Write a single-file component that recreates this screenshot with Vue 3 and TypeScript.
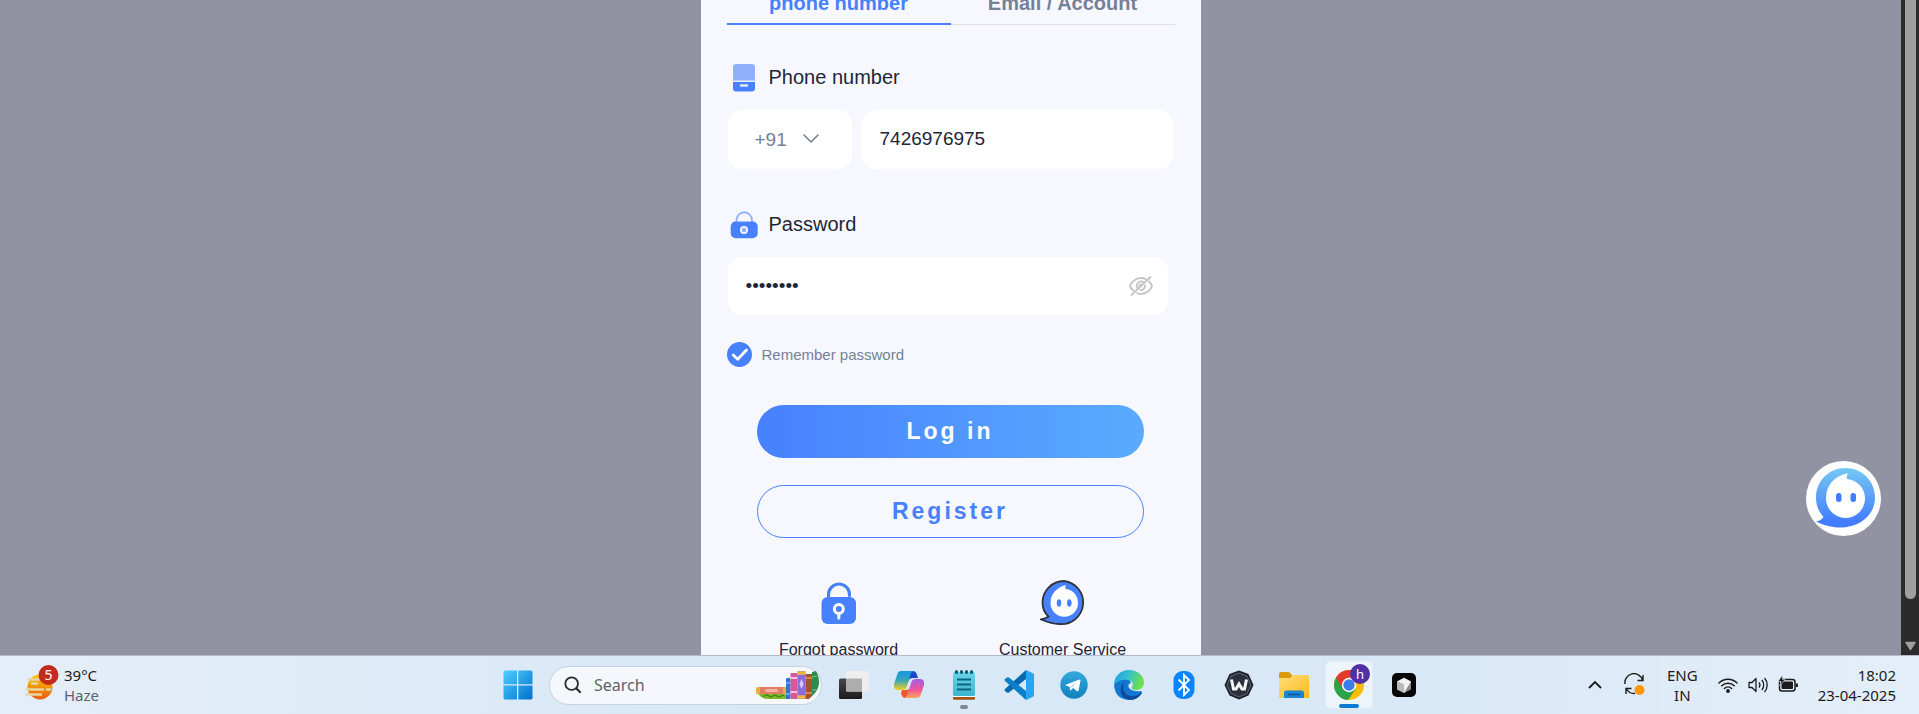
<script setup lang="ts">
import { ref } from 'vue'

const activeTab = ref<'phone' | 'email'>('phone')
const dialCode = ref('+91')
const phone = ref('7426976975')
const password = ref('password')
const remember = ref(true)
const showPassword = ref(false)
</script>

<template>
  <div class="screen">
    <div class="browser">
      <main class="page">
        <form class="card" @submit.prevent>
          <div class="tabs" role="tablist">
            <button type="button" role="tab" class="tab" :class="{ active: activeTab === 'phone' }" @click="activeTab = 'phone'">phone number</button>
            <button type="button" role="tab" class="tab" :class="{ active: activeTab === 'email' }" @click="activeTab = 'email'">Email / Account</button>
          </div>

          <label class="field-label" for="phone">
            <svg class="label-icon" viewBox="0 0 28 28" aria-hidden="true">
              <path d="M3 17V3a3 3 0 0 1 3-3h16a3 3 0 0 1 3 3v14z" fill="#91b1ff" />
              <path d="M3 18h22v6.500a3 3 0 0 1-3 3H6a3 3 0 0 1-3-3z" fill="#4781ff" />
              <path d="M2.500 17h23" stroke="#dce6ff" stroke-width="1.200" />
              <path d="M11 21.500h6" stroke="#e4ebff" stroke-width="2.400" stroke-linecap="round" />
            </svg>
            <span>Phone number</span>
          </label>
          <div class="phone-row">
            <div class="dial">
              <select v-model="dialCode" aria-label="Country code">
                <option>+91</option>
              </select>
              <svg viewBox="0 0 16 10" aria-hidden="true"><path d="M1 1l7 7 7-7" fill="none" stroke="#768096" stroke-width="1.600" stroke-linecap="round" stroke-linejoin="round" /></svg>
            </div>
            <input id="phone" v-model="phone" class="phone-input" type="tel" />
          </div>

          <label class="field-label second" for="password">
            <svg class="label-icon" viewBox="0 0 28 28" aria-hidden="true">
              <path d="M6.500 12V9a7.500 7.500 0 0 1 15.500 0v3" fill="none" stroke="#91b1ff" stroke-width="1.800" />
              <rect x="0.700" y="10.500" width="27" height="16.800" rx="5" fill="#4781ff" />
              <circle cx="14" cy="19" r="3.200" fill="#91b1ff" stroke="#f7f8ff" stroke-width="1.700" />
            </svg>
            <span>Password</span>
          </label>
          <div class="password-box">
            <input id="password" v-model="password" :type="showPassword ? 'text' : 'password'" />
            <button type="button" aria-label="Show password" @click="showPassword = !showPassword">
              <svg viewBox="0 0 24 20" aria-hidden="true">
                <g fill="none" stroke="#c3c3c3" stroke-width="1.800" stroke-linecap="round">
                  <path d="M4.500 14.500C2.500 13 1.200 11.200 1 10c.8-3.500 5.500-8 11-8 1.800 0 3.400.4 4.800 1.100" />
                  <path d="M20 5.500c1.700 1.500 2.800 3.200 3 4.500-.8 3.500-5.500 8-11 8-1.400 0-2.700-.2-3.800-.7" />
                  <path d="M8.800 12.500A4.300 4.300 0 0 1 14.500 6.200M16 9.500a4.300 4.300 0 0 1-4.500 4.700" />
                  <path d="M21.500 1L2.500 19M10.500 10.200a1.600 1.600 0 0 1 1.500-1.800" />
                </g>
              </svg>
            </button>
          </div>

          <label class="remember">
            <input v-model="remember" type="checkbox" />
            <svg v-show="remember" viewBox="0 0 25 25" aria-hidden="true"><path d="M6.200 13l4.500 4.300L19.500 8" fill="none" stroke="#fff" stroke-width="2.800" stroke-linecap="round" stroke-linejoin="round" /></svg>
            <span>Remember password</span>
          </label>

          <div class="actions">
            <button type="submit" class="action login">Log in</button>
            <button type="button" class="action register">Register</button>
          </div>

          <div class="help">
            <a href="#forgot">
              <svg viewBox="0 0 46 46" aria-hidden="true">
                <path d="M12.500 19v-5a10.500 10.500 0 0 1 21 0v2" fill="none" stroke="#fff" stroke-width="5" stroke-linecap="round" />
                <rect x="4.500" y="16" width="36.500" height="29" rx="7" fill="#fff" />
                <path d="M12.500 19v-4.500a10.500 10.500 0 0 1 21 0v1" fill="none" stroke="#4781ff" stroke-width="3.200" stroke-linecap="round" />
                <rect x="5.500" y="17" width="34.500" height="27" rx="6" fill="#4781ff" />
                <circle cx="22.800" cy="29" r="4.500" fill="none" stroke="#fff" stroke-width="3" />
                <path d="M22.800 34.500v3.500" stroke="#fff" stroke-width="3" stroke-linecap="round" />
              </svg>
              Forgot password
            </a>
            <a href="#service">
              <svg viewBox="0 0 46 46" aria-hidden="true">
                <path d="M24 1a21.500 21.500 0 1 1-5 43C13 44 6 41.500 1 39.500c3-.4 5-1 7.500-3C4.500 33 2.500 28 2.500 22.500A21.500 21.500 0 0 1 24 1z" fill="#4781ff" stroke="#30343c" stroke-width="1.800" />
                <path d="M10.500 23c0-9 6-15.500 15.500-18-.8 1.500-1 2.800-.4 4C33 9.500 38 15.500 38 23a13.700 13.700 0 0 1-27.500 0z" fill="#fff" />
                <ellipse cx="19" cy="23" rx="2.300" ry="3.800" fill="#4781ff" />
                <ellipse cx="29.300" cy="23" rx="2.300" ry="3.800" fill="#4781ff" />
              </svg>
              Customer Service
            </a>
          </div>
        </form>
        <button type="button" class="chat" aria-label="Chat">
          <svg viewBox="0 0 75 75" aria-hidden="true">
            <defs>
              <linearGradient id="bubble" x1="0" y1="0" x2="0" y2="1"><stop offset="0" stop-color="#74c8f3" /><stop offset=".5" stop-color="#5a9ff8" /><stop offset=".9" stop-color="#437dff" /></linearGradient>
            </defs>
            <path d="M39.500 7C56 7 69 20 69 36.500 69 54 54 66.500 34 66.500c-9 0-17-2.500-24-6 3-.3 5-1.500 7.500-4.500C13 51 10 44.500 10 36.500 10 20 23 7 39.500 7z" fill="url(#bubble)" />
            <path d="M20 37.500C20 24 28 15.500 42 12c-1.300 2-1.600 3.800-1 6A19.500 19.500 0 1 1 20 37.500z" fill="#fff" />
            <rect x="30" y="32" width="5.500" height="9" rx="2.700" fill="#437dff" />
            <rect x="44.500" y="32" width="5.500" height="9" rx="2.700" fill="#437dff" />
          </svg>
        </button>
      </main>
      <div class="scrollbar" aria-hidden="true">
        <div class="thumb"></div>
        <svg viewBox="0 0 12 10"><path d="M1 1h10L6 9z" fill="#9f9f9f" stroke="#9f9f9f" stroke-linejoin="round" stroke-width="1.500" /></svg>
      </div>
    </div>

    <footer class="taskbar">
      <button type="button" class="weather">
        <svg viewBox="0 0 34 36" aria-hidden="true">
          <defs><linearGradient id="sun" x1="0" y1="0" x2="0" y2="1"><stop offset="0" stop-color="#ffc800" /><stop offset="1" stop-color="#e85b0c" /></linearGradient></defs>
          <circle cx="15" cy="22" r="12.500" fill="url(#sun)" />
          <path d="M4 14.500h10M7 18.500h5M1.500 24.500H18M22 24.500h3M1.500 29.500H16" stroke="#e5d6a8" stroke-width="2.600" stroke-linecap="round" />
          <circle cx="23.500" cy="10" r="10" fill="#c42b1c" />
          <text x="23.500" y="15" text-anchor="middle" font-size="14" fill="#fff">5</text>
        </svg>
        <span class="weather-text"><span>39°C</span><span class="muted">Haze</span></span>
      </button>

      <div class="apps">
        <button type="button" class="app" aria-label="Start">
          <svg class="icon" viewBox="0 0 30 30">
            <defs><linearGradient id="win" x1="0" y1="0" x2="1" y2="1"><stop offset="0" stop-color="#4fd0ff" /><stop offset="1" stop-color="#0070cf" /></linearGradient></defs>
            <path d="M2 .5h12v13.700H.5V2A1.500 1.500 0 0 1 2 .5zM15.300.5H28A1.500 1.500 0 0 1 29.500 2v12.200H15.300zM.5 15.400H14v14H2A1.500 1.500 0 0 1 .5 28zM15.300 15.400h14.200V28a1.500 1.500 0 0 1-1.500 1.400H15.300z" fill="url(#win)" />
          </svg>
        </button>
        <label class="search">
          <svg class="glass" viewBox="0 0 20 20" aria-hidden="true"><circle cx="8.500" cy="8.500" r="7" fill="none" stroke="#2b2b2b" stroke-width="2" /><path d="M13.500 13.500l5 5" stroke="#2b2b2b" stroke-width="2.400" /></svg>
          <input type="search" placeholder="Search" aria-label="Search" />
          <svg class="books" viewBox="0 0 64 30" aria-hidden="true">
            <path d="M3 24h29v5H13q-6 0-10-5z" fill="#7db928" /><path d="M8 26.500l4-1.500 4 2 4-2 4 2 5-2" fill="none" stroke="#45821a" stroke-width="1.200" />
            <rect x="1" y="17" width="31" height="7" rx="1.500" fill="#e8b03c" /><rect x="5" y="17" width="23" height="7" fill="#e37b66" /><rect x="10" y="19" width="13" height="3" rx="1.500" fill="#f4b3a4" />
            <rect x="31" y="8" width="4.500" height="21" rx="1" fill="#2f74d2" /><path d="M31 13h4.500M31 24h4.500" stroke="#a7d0fa" />
            <rect x="35.500" y="3" width="7" height="26" rx="1" fill="#d65a98" /><path d="M35.500 8h7M35.500 22h7" stroke="#f8c2dc" stroke-width="2" />
            <rect x="42.500" y="1" width="8" height="28" rx="1" fill="#8a6bd8" /><path d="M42.500 3h8M42.500 27h8" stroke="#f0b740" stroke-width="3.500" /><path d="M46.500 9l2.200 5-2.200 5-2.200-5z" fill="#d9c7ff" />
            <path d="M50.500 4h6.500v22l-3 3h-3.500z" fill="#a4532b" /><path d="M50.500 8h6.500M50.500 23h6.500" stroke="#e89a5c" stroke-width="1.500" />
            <path d="M57 2l4-1q3 5 3 12t-7 13z" fill="#2f8a50" /><path d="M57 7l5-1M57 20h5" stroke="#7cc98c" />
          </svg>
        </label>
        <button type="button" class="app" aria-label="Task view">
          <svg class="icon" viewBox="0 0 30 30"><defs><linearGradient id="tv" x1="0" y1="0" x2="0" y2="1"><stop offset="0" stop-color="#484848" /><stop offset="1" stop-color="#1b1b1b" /></linearGradient></defs><rect x="0" y="8.500" width="23" height="20.500" rx="1.500" fill="url(#tv)" /><rect x="7" y="1" width="23" height="20.500" rx="1.500" fill="#eee" /><path d="M7 8.500h16v13H8.500A1.500 1.500 0 0 1 7 20z" fill="#adadad" /></svg>
        </button>
        <button type="button" class="app" aria-label="Copilot">
          <svg class="icon" viewBox="0 0 30 30">
            <defs>
              <linearGradient id="cp1" x1="0" y1="0" x2="0" y2="1"><stop offset="0" stop-color="#1696e8" /><stop offset=".5" stop-color="#3aa6b4" /><stop offset="1" stop-color="#f3cf1c" /></linearGradient>
              <linearGradient id="cp2" x1="0" y1="0" x2="0" y2="1"><stop offset="0" stop-color="#a65bea" /><stop offset=".55" stop-color="#f0569a" /><stop offset="1" stop-color="#ffa55b" /></linearGradient>
            </defs>
            <path d="M14 1h5q3 0 4 4l1 3h-5q-4 0-5 4z" fill="#174bc8" />
            <path d="M8 20h4l4-1-3 7-1 2H11q-3 0-4-5z" fill="#f4572e" />
            <path d="M7 1h13q-3 1-4 5l-3 10q-1 4-5 4H4q-5 0-4-6L3 5Q4 1 7 1z" fill="url(#cp1)" />
            <path d="M23 28H10q3-1 4-5l3-10q1-4 5-4h4q5 0 4 6l-3 9q-1 4-4 4z" fill="url(#cp2)" />
          </svg>
        </button>
        <button type="button" class="app running" aria-label="Notepad">
          <svg class="icon" viewBox="0 0 30 30"><defs><linearGradient id="np" x1="0" y1="0" x2="0" y2="1"><stop offset="0" stop-color="#6bd5e6" /><stop offset="1" stop-color="#3bb5d0" /></linearGradient></defs><rect x="4" y="25" width="22" height="4.800" rx="1.500" fill="#a3541a" /><path d="M4 25h22v2H4z" fill="#fff" /><rect x="4" y="2" width="22" height="24" rx="1.500" fill="url(#np)" /><path d="M8 9.500h14M8 14.500h14M8 19.500h14" stroke="#0b6480" stroke-width="2" /><path d="M7.500 1.500v1M12.500 1.500v1M17.500 1.500v1M22.500 1.500v1" stroke="#0b5a73" stroke-width="3" stroke-linecap="round" /></svg>
        </button>
        <button type="button" class="app" aria-label="Visual Studio Code">
          <svg class="icon" viewBox="0 0 30 30"><path d="M22 0L1 19q-1 1 0 2l2 1.500q1 .5 2 0L22 9z" fill="#0a68b0" /><path d="M22 30L1 11q-1-1 0-2l2-1.500q1-.5 2 0L22 21z" fill="#0c7fc9" /><path d="M22 0l7 3.300q1 .5 1 1.700v20q0 1.200-1 1.700L22 30z" fill="#27a5f2" /></svg>
        </button>
        <button type="button" class="app" aria-label="Telegram">
          <svg class="icon" viewBox="0 0 30 30"><defs><linearGradient id="tg" x1="0" y1="0" x2="0" y2="1"><stop offset="0" stop-color="#34a9df" /><stop offset="1" stop-color="#1281bd" /></linearGradient></defs><circle cx="15" cy="15" r="13.700" fill="url(#tg)" /><path d="M6 15l14.500-5.500q1.300-.4 1 1L19.500 20.500q-.4 1.300-1.600.5l-3.900-3-2.200 2.200q-1 .8-1-1V17z" fill="#fff" /><path d="M11 17l7-5-5 5.500z" fill="#b7d5e8" /></svg>
        </button>
        <button type="button" class="app" aria-label="Edge">
          <svg class="icon" viewBox="0 0 30 30">
            <defs><linearGradient id="ed" x1="0" y1="0" x2="1" y2=".3"><stop offset="0" stop-color="#1e9be8" /><stop offset=".5" stop-color="#35bfd0" /><stop offset="1" stop-color="#6ce04c" /></linearGradient></defs>
            <path d="M0 15Q1 8 9 8q7 0 8 5-4 1-2 5 4 4 12 3l1 1Q24 30 15 30 1 29 0 15z" fill="#1277d0" />
            <path d="M0 15C0 6 7 0 15 0c9 0 15 6 15 12.500 0 5-4 7.500-8 7.500-3.500 0-5-1.500-4-3 2-4 0-6.500-4-7C8 9 3 11 0 15z" fill="url(#ed)" />
            <path d="M11.500 12c-3.500 3-3 10 2 13 4.500 2.500 10.500 1 13.500-2.500q1.300-.4 1 .5C24 29.500 17 31 12.500 29 5 25.500 5 15 11.500 12z" fill="#114a9a" />
          </svg>
        </button>
        <button type="button" class="app" aria-label="Bluetooth">
          <svg class="icon" viewBox="0 0 30 30"><rect x="4.500" y="1" width="21" height="28" rx="9" fill="#0a84ff" /><path d="M9.500 9.500L20 20l-5 5V5l5 5L9.500 20.500" fill="none" stroke="#fff" stroke-width="1.800" /></svg>
        </button>
        <button type="button" class="app" aria-label="Wolf">
          <svg class="icon" viewBox="0 0 30 30"><path d="M15 .5l9.500 3.500 5 11-5 10.500L15 29.500 5.500 25.500.5 15l5-11z" fill="#1d2028" /><path d="M15 3l8 3 4 9-4 8.500-8 3.500-8-3.500L3 15l4-9z" fill="#2b303c" stroke="#747986" stroke-width=".8" /><path d="M7.500 9.500l2 9.500h2.500l3-5 3 5h2.500l2-9.500" fill="none" stroke="#f4f5f7" stroke-width="3" /></svg>
        </button>
        <button type="button" class="app" aria-label="File Explorer">
          <svg class="icon" viewBox="0 0 30 30"><defs><linearGradient id="fd" x1="0" y1="0" x2="1" y2="1"><stop offset="0" stop-color="#ffe07a" /><stop offset="1" stop-color="#fcb81c" /></linearGradient></defs><path d="M0 4a2 2 0 0 1 2-2h8l3 3v5H0z" fill="#dc9a0c" /><path d="M0 8h11l3-3h14.500A1.500 1.500 0 0 1 30 6.500V28H0z" fill="url(#fd)" /><path d="M5 28v-5a2.500 2.500 0 0 1 2.500-2.500h15A2.500 2.500 0 0 1 25 23v5z" fill="#1c84d4" /><path d="M9 24.500h12" stroke="#0b559a" stroke-width="1.500" /></svg>
        </button>
        <button type="button" class="app" aria-label="Chrome">
          <span class="tile">
            <svg class="icon chrome" viewBox="0 6 30 30">
              <circle cx="15" cy="21" r="15" fill="#fbbc05" />
              <path d="M15 21L2 13.500A15 15 0 0 0 14 36l7.500-11z" fill="#2ba24c" />
              <path d="M2 13.500A15 15 0 0 1 28 13.500H15L8.500 25z" fill="#e33b2e" />
              <circle cx="15" cy="21" r="7.200" fill="#fff" /><circle cx="15" cy="21" r="5.700" fill="#3b7ded" />
              <circle cx="26" cy="10" r="10" fill="#5130a5" />
              <text x="26" y="14.500" text-anchor="middle" font-size="13" fill="#fff">h</text>
            </svg>
          </span>
        </button>
        <button type="button" class="app" aria-label="Cursor">
          <svg class="icon" viewBox="0 0 30 30"><rect x="3" y="3" width="24" height="24" rx="5" fill="#050505" /><path d="M15 7.500l7 4v8L15 23l-7-3.500v-8z" fill="#8b8b8b" /><path d="M8 11.500L15 8l7 3.500L15 23v-8.500z" fill="#f1f1f1" /><path d="M8 11.500l7 3V23l-7-3.500z" fill="#b9b9b9" /></svg>
        </button>
      </div>

      <div class="tray">
        <button type="button" aria-label="Hidden icons"><svg width="16" height="10" viewBox="0 0 16 10"><path d="M2 8l6-6 6 6" fill="none" stroke="#1b1b1b" stroke-width="1.800" /></svg></button>
        <button type="button" aria-label="Updates"><svg width="24" height="24" viewBox="0 0 24 24"><path d="M2 11A9 9 0 0 1 19.500 7M20 2v5.500h-5.500M3 21v-5.500h5.500M3.500 16A9 9 0 0 0 12 20.500" fill="none" stroke="#1b1b1b" stroke-width="1.400" /><circle cx="16.500" cy="17" r="5" fill="#ff9800" /></svg></button>
        <button type="button" class="lang"><span>ENG</span><span>IN</span></button>
        <button type="button" class="status" aria-label="Network, sound, battery">
          <svg width="20" height="20" viewBox="0 0 20 20"><g fill="none" stroke="#1b1b1b" stroke-width="1.500" stroke-linecap="round"><path d="M1 8a12.500 12.500 0 0 1 18 0M3.700 10.800a9 9 0 0 1 12.600 0M6.400 13.500a5.200 5.200 0 0 1 7.200 0" /></g><circle cx="10" cy="16" r="1.900" fill="#1b1b1b" /></svg>
          <svg width="20" height="20" viewBox="0 0 20 20"><path d="M1 7.500h3l4-4v13l-4-4H1zM11 7.500a4 4 0 0 1 0 5M13.800 5a7.500 7.500 0 0 1 0 10M16.500 3a10.500 10.500 0 0 1 0 14" fill="none" stroke="#1b1b1b" stroke-width="1.300" stroke-linejoin="round" /></svg>
          <svg width="20" height="20" viewBox="0 0 20 20"><rect x="1.500" y="4.500" width="15.500" height="11.500" rx="2.500" fill="none" stroke="#1b1b1b" stroke-width="1.500" /><rect x="3.500" y="6.500" width="11.500" height="7.500" rx="1" fill="#1b1b1b" /><path d="M18.800 8.500v3.500" stroke="#1b1b1b" stroke-width="2.200" /><path d="M4.500 0L0 6.500h3L1.800 11 7 4.500H4.500z" fill="#1b1b1b" stroke="#e3eef9" stroke-width=".6" /></svg>
        </button>
        <button type="button" class="clock"><span>18:02</span><span>23-04-2025</span></button>
      </div>
    </footer>
  </div>
</template>

<style>
body {
  margin: 0;
}
</style>

<style scoped>
* {
  box-sizing: border-box;
}
button,
input,
select {
  margin: 0;
  padding: 0;
  border: 0;
  outline: 0;
  background: none;
  font: inherit;
  color: inherit;
}
svg {
  display: block;
  flex: none;
}
.screen {
  display: flex;
  flex-direction: column;
  height: 100vh;
  overflow: hidden;
  font-family: 'Liberation Sans', Arial, sans-serif;
  color: #1e2637;
}
.browser {
  flex: 1;
  min-height: 0;
  display: flex;
}
.page {
  position: relative;
  flex: 1;
  min-width: 0;
  overflow: hidden;
  background: #9193a3;
  display: flex;
  justify-content: center;
}
.card {
  flex: 0 1 500px;
  min-height: 100%;
  margin-top: -17px;
  padding: 0 26px;
  background: #f7f8ff;
}
.tabs {
  display: grid;
  grid-template-columns: 1fr 1fr;
  height: 42px;
}
.tab {
  border-bottom: 1px solid #e2e2e2;
  font-size: 20px;
  font-weight: 700;
  color: #768096;
}
.tab.active {
  color: #4781ff;
  border-bottom: 2px solid #4781ff;
}
.field-label {
  display: flex;
  align-items: center;
  gap: 11px;
  height: 28px;
  margin: 39px 3px 18px;
  font-size: 20px;
}
.field-label span {
  padding-bottom: 2px;
}
.field-label.second {
  margin-top: 42px;
}
.label-icon {
  width: 28px;
  height: 28px;
}
.phone-row {
  display: flex;
  gap: 10px;
  padding: 0 2px 0 1px;
  font-size: 19px;
}
.dial {
  position: relative;
  flex: 0 0 124px;
}
.dial select {
  appearance: none;
  width: 100%;
  height: 59px;
  padding-left: 27px;
  border-radius: 14px;
  background: #fff;
  color: #768096;
}
.dial svg {
  position: absolute;
  right: 33px;
  top: 24px;
  width: 16px;
  pointer-events: none;
}
.phone-input {
  flex: 1;
  min-width: 0;
  height: 59px;
  padding: 0 18px 2px;
  border-radius: 14px;
  background: #fff;
}
.password-box {
  display: flex;
  align-items: center;
  height: 58px;
  margin: 0 7px 0 1px;
  padding: 0 15px 0 18px;
  border-radius: 14px;
  background: #fff;
  font-size: 19px;
}
.password-box input {
  flex: 1;
  min-width: 0;
  height: 100%;
}
.password-box svg {
  width: 24px;
  height: 20px;
}
.remember {
  position: relative;
  display: flex;
  align-items: center;
  gap: 10px;
  margin-top: 27px;
  font-size: 15px;
  color: #768096;
}
.remember input {
  appearance: none;
  width: 25px;
  height: 25px;
  border-radius: 50%;
  border: 1px solid #768096;
}
.remember input:checked {
  border: 0;
  background: #4781ff;
}
.remember svg {
  position: absolute;
  left: 0;
  top: 0;
  width: 25px;
  pointer-events: none;
}
.actions {
  display: grid;
  gap: 27px;
  margin: 38px 31px 42px 30px;
}
.action {
  height: 53px;
  border-radius: 27px;
  font-size: 23px;
  font-weight: 700;
  letter-spacing: 3px;
}
.login {
  background: linear-gradient(90deg, #4781ff, #5aabff);
  color: #fff;
}
.register {
  border: 1px solid #4781ff;
  color: #4781ff;
}
.help {
  display: grid;
  grid-template-columns: 1fr 1fr;
}
.help a {
  display: flex;
  flex-direction: column;
  align-items: center;
  gap: 14px;
  font-size: 16px;
  line-height: 20px;
  color: inherit;
  text-decoration: none;
}
.help svg {
  width: 46px;
  height: 46px;
}
.chat {
  position: absolute;
  right: 20px;
  bottom: 119px;
  width: 75px;
  height: 75px;
  border-radius: 50%;
  background: #fff;
}
.scrollbar {
  flex: none;
  display: flex;
  flex-direction: column;
  justify-content: space-between;
  width: 18px;
  padding: 0 3px 4px 4px;
  background: #2b2b2b;
}
.thumb {
  height: 92%;
  border-radius: 0 0 6px 6px;
  background: #9f9f9f;
}
.scrollbar svg {
  height: 10px;
}
.taskbar {
  flex: none;
  display: grid;
  grid-template-columns: 1fr auto 1fr;
  align-items: center;
  height: 59px;
  border-top: 1px solid #b3bac8;
  background: linear-gradient(90deg, #e4eef8, #d8e8f7 40%, #d8e8f7 70%, #e4eef8);
  font-family: 'Noto Sans', sans-serif;
  font-size: 15px;
  line-height: 20px;
  color: #1b1b1b;
}
.weather {
  display: flex;
  gap: 5px;
  padding-left: 25px;
  text-align: left;
}
.weather svg {
  width: 34px;
  height: 36px;
}
.weather-text,
.lang,
.clock {
  display: flex;
  flex-direction: column;
}
.muted {
  color: #5d6269;
}
.apps {
  display: flex;
  align-items: center;
  padding-left: 2px;
}
.app {
  position: relative;
  display: grid;
  place-items: center;
  width: 55px;
  height: 58px;
}
.icon {
  width: 30px;
  height: 30px;
}
.running::after {
  content: '';
  position: absolute;
  bottom: 5px;
  width: 8px;
  height: 4px;
  border-radius: 2px;
  background: #7e868f;
}
.tile {
  position: relative;
  display: grid;
  place-items: center;
  width: 48px;
  height: 48px;
  border: 1px solid #e3ebf4;
  border-radius: 5px;
  background: #edf4fb;
}
.tile::after {
  content: '';
  position: absolute;
  bottom: 0;
  left: 13px;
  width: 20px;
  height: 4px;
  border-radius: 2px;
  background: #0b7ad4;
}
.chrome {
  overflow: visible;
}
.search {
  display: flex;
  align-items: center;
  width: 273px;
  height: 39px;
  margin: 0 4px;
  padding: 0 2px 0 14px;
  border: 1px solid #c5d1de;
  border-radius: 20px;
  background: #f4f8fd;
}
.glass {
  width: 18px;
  height: 18px;
}
.search input {
  flex: 1;
  min-width: 0;
  padding-left: 12px;
  font-size: 16px;
}
.search input::placeholder {
  color: #5f6368;
  opacity: 1;
}
.books {
  width: 64px;
  height: 30px;
}
.tray {
  display: flex;
  justify-content: flex-end;
  align-items: center;
  padding-right: 23px;
}
.tray > button {
  margin-left: 20px;
}
.lang {
  align-items: center;
}
.status {
  display: flex;
  gap: 10px;
}
.clock {
  align-items: flex-end;
}
</style>
